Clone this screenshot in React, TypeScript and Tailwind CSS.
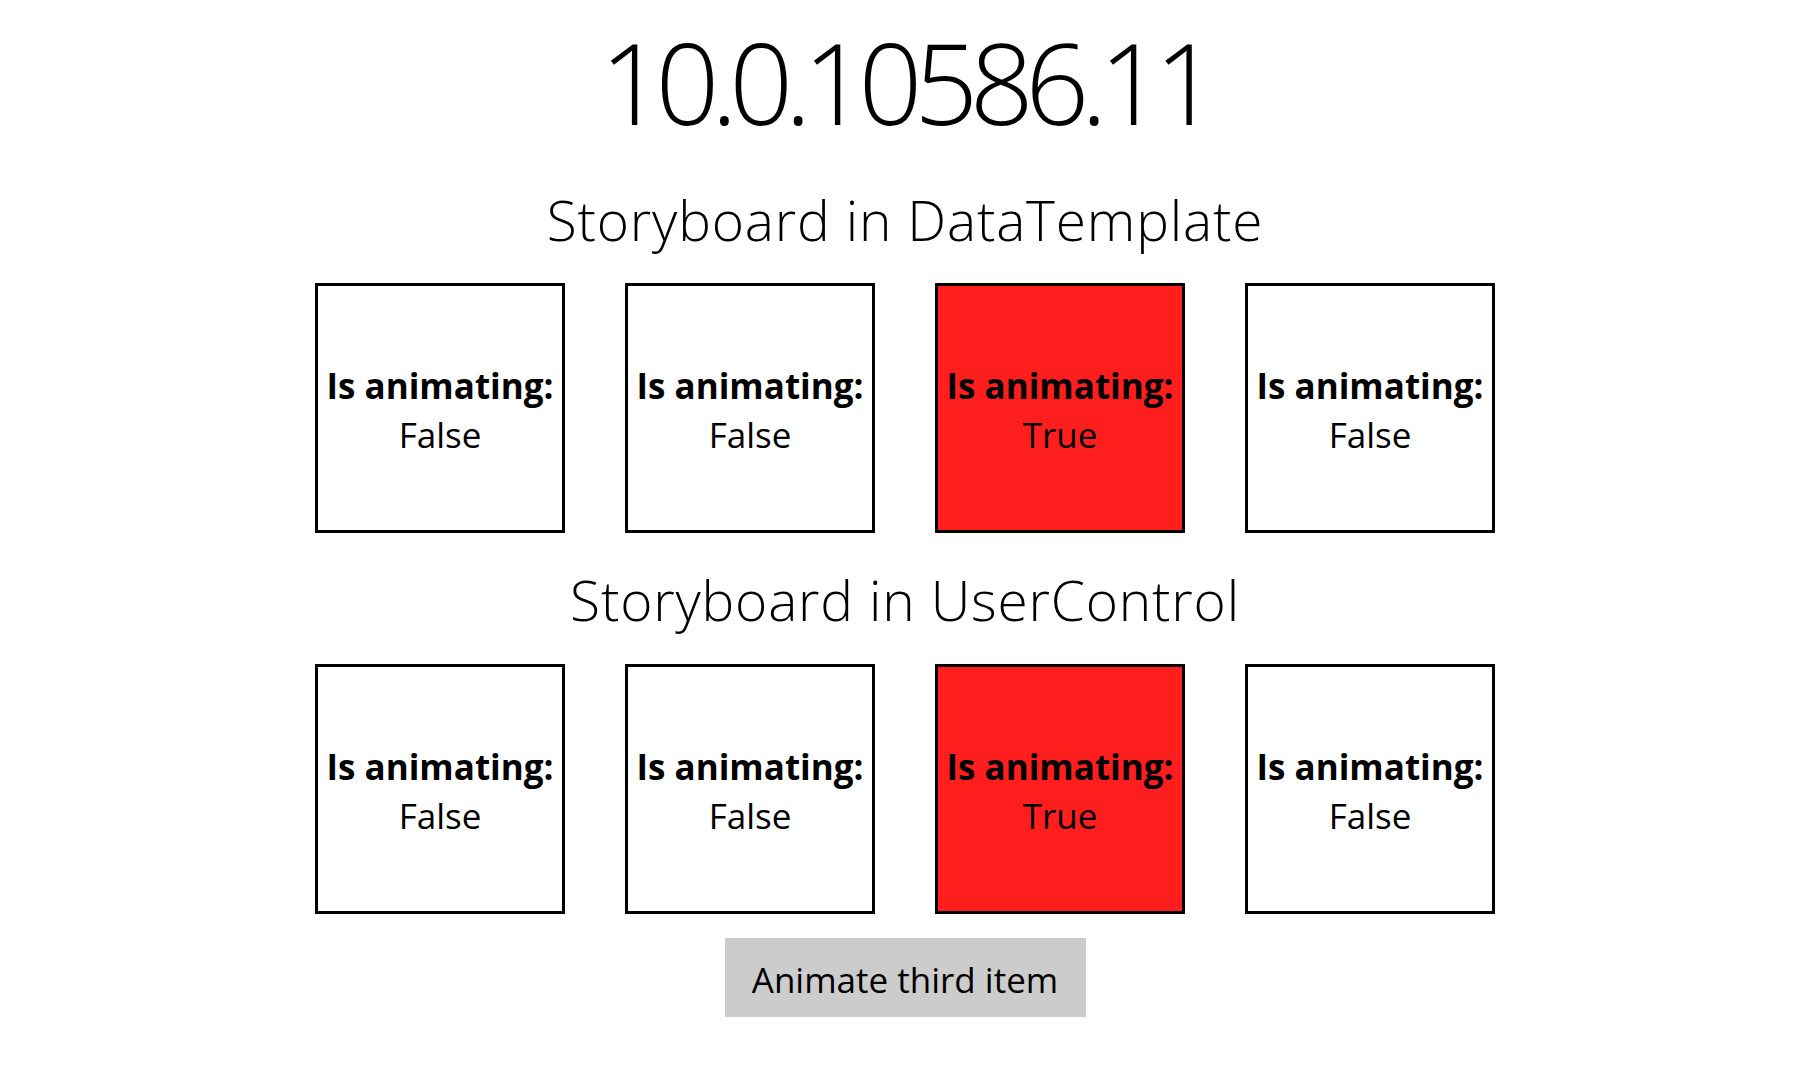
const ITEMS = [false, false, true, false];

function StatusBox({ active }: { active: boolean }) {
  return (
    <div
      className={
        "w-[250px] h-[250px] border-[3px] border-black flex flex-col items-center justify-center pt-[4px] " +
        (active ? "bg-[#fe1e1e]" : "bg-white")
      }
    >
      <p className="text-[35px] leading-[49px] font-bold text-black">Is animating:</p>
      <p className="text-[35px] leading-[49px] font-normal text-black">{active ? "True" : "False"}</p>
    </div>
  );
}

function BoxRow() {
  return (
    <div className="flex gap-[60px]">
      {ITEMS.map((active, i) => (
        <StatusBox key={i} active={active} />
      ))}
    </div>
  );
}

export default function App() {
  return (
    <main
      className="min-h-screen w-full bg-white flex flex-col items-center text-black"
      style={{ fontFamily: '"Open Sans", "Noto Sans", sans-serif' }}
    >
      <h1 className="pt-[10px] text-[112px] leading-[140px] font-light tracking-[-0.075em] translate-y-[2px]">10.0.10586.11</h1>

      <h2 className="mt-[35px] text-[55px] leading-[70px] font-light tracking-[0.015em]">Storyboard in DataTemplate</h2>
      <div className="mt-[28px]">
        <BoxRow />
      </div>

      <h2 className="mt-[32px] text-[55px] leading-[70px] font-light tracking-[0.015em]">Storyboard in UserControl</h2>
      <div className="mt-[29px]">
        <BoxRow />
      </div>

      <button className="mt-[24px] w-[361px] h-[79px] pt-[5px] bg-[#cccccc] text-[35px] font-normal text-black">
        Animate third item
      </button>
    </main>
  );
}
